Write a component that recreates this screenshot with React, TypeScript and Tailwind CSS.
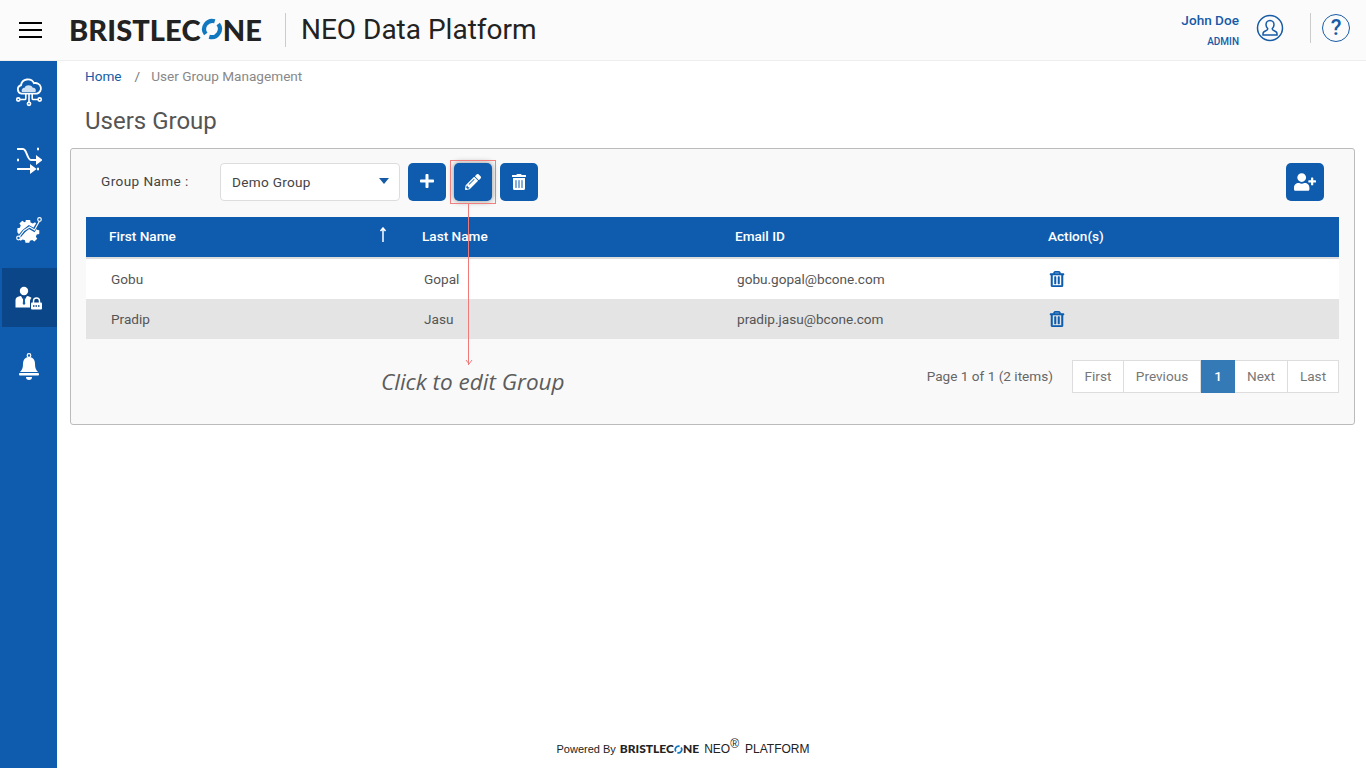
import React from "react";
import { FaPlus, FaPencilAlt, FaTrashAlt, FaUserPlus, FaRegTrashAlt } from "react-icons/fa";

function LogoO({ size }: { size: number }) {
  return (
    <svg width={size} height={size} viewBox="0 0 24 24" className="inline-block shrink-0">
      <path d="M5.2 17.5A9 9 0 0 1 15 3.5" fill="none" stroke="#1178c0" strokeWidth="4.6" />
      <path d="M18.8 6.5A9 9 0 0 1 9 20.5" fill="none" stroke="#1178c0" strokeWidth="4.6" />
    </svg>
  );
}

function Logo({ small }: { small?: boolean }) {
  if (small) {
    return (
      <span className="flex items-center font-['Lato',sans-serif] font-black text-[12px] leading-none text-[#222]">
        BRISTLEC<LogoO size={9} />NE
      </span>
    );
  }
  return (
    <span className="flex items-center font-['Lato',sans-serif] font-black text-[29px] leading-none text-[#222] tracking-[0.1px]">
      BRISTLEC<LogoO size={22} />NE
    </span>
  );
}

const CloudIcon = () => (
  <svg width="30" height="30" viewBox="0 0 28 28" fill="none" stroke="#fff" strokeWidth="1.5">
    <path d="M7 15.5a4 4 0 0 1-.5-7.8A6.5 6.5 0 0 1 18.7 5.8 4.9 4.9 0 0 1 21.5 15.5Z" fill="#0f5cae" strokeWidth="1.7" />
    <path d="M7.5 14c-1-2 .5-4 2.5-4 1-3 6-3 7.5 0 2.5 0 3.5 2 2.5 4Z" fill="#cfe0f2" stroke="none" />
    <path d="M14 15.5V24M11 15.5v4.500q0 1-1 1H5.500M17 15.5v4.500q0 1 1 1h4.500" />
    <circle cx="4" cy="21" r="1.500" /><circle cx="24" cy="21" r="1.500" /><circle cx="14" cy="25" r="1.500" />
  </svg>
);
const ShuffleIcon = () => (
  <svg width="26" height="28" viewBox="0 0 26 28" fill="none" stroke="#fff" strokeWidth="2">
    <path d="M1 3h6c4 0 4 11 8 11h7" />
    <path d="M21 11l4 3-4 3Z" fill="#fff" />
    <path d="M1 23h15" />
    <path d="M15 20l4 3-4 3Z" fill="#fff" />
    <path d="M1 14h2M21 3h2M21 23h2" strokeWidth="2.4" />
  </svg>
);
const GearIcon = () => (
  <svg width="28" height="28" viewBox="0 0 28 28" fill="none">
    <path d="M11 4h5l.6 3 2.600 1.200 2.600-1.500 3 3.500-1.800 2.500.8 2.800 3 .8v4.200l-3 .7-1 2.600 1.600 2.500-3.400 3-2.500-1.700-2.700 1-.8 2.400h-4.400l-.7-3-2.600-1-2.500 1.600-3-3.200 1.600-2.600-1-2.600L1 18.500v-4.600l3-.7 1-2.600-1.600-2.500 3.400-3 2.500 1.700 1.300-.6Z" fill="#fff" transform="translate(1.500 1.500) scale(0.85)" />
    <path d="M3 23l6-7 5-4 5 3 6-10" stroke="#0f5cae" strokeWidth="3.400" />
    <path d="M4 22l5-6.500 5.500-3.500 5 3 5-9" stroke="#fff" strokeWidth="1.200" />
    <circle cx="24.500" cy="4.500" r="1.800" stroke="#fff" strokeWidth="1.200" fill="#0f5cae" />
    <circle cx="3.500" cy="23" r="1.800" stroke="#fff" strokeWidth="1.200" fill="#0f5cae" />
  </svg>
);
const UserLockIcon = () => (
  <svg width="28" height="28" viewBox="0 0 28 28">
    <circle cx="9" cy="7" r="4.2" fill="#fff" />
    <path d="M0.500 23.500V16c0-2.500 2-3.500 5.500-4l3 5 3-5c2 .3 3.500 .8 4.500 2-1 .8-1.500 2-1.500 3.500V23.500Z" fill="#fff" />
    <path d="M8.300 13.500h1.400l.5 6-1.200 1.800L7.800 19.500Z" fill="#0f5cae" />
    <path d="M18.500 19v-2a3 3 0 0 1 6 0v2" fill="none" stroke="#fff" strokeWidth="1.400" />
    <rect x="16" y="18.500" width="11" height="7" rx="1" fill="#fff" />
    <path d="M18 22h7" stroke="#0a4688" strokeWidth="1.600" strokeDasharray="1.500 1" />
  </svg>
);
const BellIcon = () => (
  <svg width="26" height="30" viewBox="0 0 26 30">
    <circle cx="13" cy="3.500" r="1.800" fill="none" stroke="#fff" strokeWidth="1.200" />
    <path d="M13 5c4 0 6 3 6 7 0 4 1 6 3 8H4c2-2 3-4 3-8 0-4 2-7 6-7Z" fill="#fff" />
    <rect x="3" y="21" width="20" height="2.500" rx="1" fill="#fff" />
    <path d="M10 25h6a3 3 0 0 1-6 0Z" fill="#fff" />
  </svg>
);

function SideItem({ active, children }: { active?: boolean; children: React.ReactNode }) {
  return (
    <div className={`h-[59px] ml-[2px] pr-[2px] flex items-center justify-center ${active ? "bg-[#0a4688]" : ""}`}>
      {children}
    </div>
  );
}

function IconBtn({ children, shadow }: { children: React.ReactNode; shadow?: boolean }) {
  return (
    <button className={`w-[38px] h-[38px] rounded-[5px] bg-[#0f5cae] text-white flex items-center justify-center ${shadow ? "shadow-[0_0_6px_rgba(0,0,0,0.45)]" : ""}`}>
      {children}
    </button>
  );
}

function PageBtn({ label, active, className }: { label: string; active?: boolean; className: string }) {
  return (
    <div className={`h-[33px] flex items-center justify-center text-[13.6px] ${active ? "bg-[#337ab7] text-white font-medium" : "bg-white text-[#777] border-y border-r border-[#ddd]"} ${className}`}>
      {label}
    </div>
  );
}

const rows = [
  { first: "Gobu", last: "Gopal", email: "gobu.gopal@bcone.com", bg: "bg-white" },
  { first: "Pradip", last: "Jasu", email: "pradip.jasu@bcone.com", bg: "bg-[#e4e4e4]" },
];

export default function App() {
  return (
    <div className="w-[1366px] h-[768px] overflow-hidden bg-white font-['Roboto',sans-serif] flex flex-col">
      <header className="h-[61px] shrink-0 bg-[#fbfbfb] border-b border-[#eee] flex items-center">
        <div className="ml-[19px] w-[23px] flex flex-col gap-[5px]">
          <span className="h-[2px] bg-black block" />
          <span className="h-[2px] bg-black block" />
          <span className="h-[2px] bg-black block" />
        </div>
        <div className="ml-[27px] mb-[2px]"><Logo /></div>
        <div className="ml-[23px] w-px h-[34px] bg-[#ccc]" />
        <div className="ml-[15px] text-[28px] leading-none text-[#222]">NEO Data Platform</div>
        <div className="ml-auto flex items-center">
          <div className="flex flex-col items-end text-[#175ba6]">
            <span className="text-[13.6px] leading-[16px] font-medium mt-[-1px]">John Doe</span>
            <span className="text-[10px] leading-[12px] font-medium mt-[8px]">ADMIN</span>
          </div>
          <svg width="28" height="28" viewBox="0 0 28 28" fill="none" stroke="#175ba6" strokeWidth="1.500" className="ml-[17px] mb-[4px]">
            <circle cx="14" cy="14" r="12.500" />
            <path d="M14 6.500c-2.500 0-4 2-4 4.200 0 1.800.8 3 1.800 4 0 1-.5 1.500-2 2-1.500.5-2.800 1.300-2.800 2.800V21h14v-1.500c0-1.500-1.300-2.300-2.800-2.800-1.500-.5-2-1-2-2 1-1 1.800-2.200 1.800-4 0-2.200-1.500-4.200-4-4.200Z" />
          </svg>
          <div className="ml-[26px] w-px h-[30px] bg-[#ccc] mb-[4px]" />
          <div className="ml-[11px] mr-[16px] mb-[4px] w-[28px] h-[28px] rounded-full border-[1.5px] border-[#175ba6] text-[#175ba6] flex items-center justify-center text-[22px] font-medium leading-none">?</div>
        </div>
      </header>

      <div className="flex flex-1 min-h-0">
        <aside className="w-[57px] shrink-0 bg-[#0f5cae] flex flex-col pt-[1px]">
          <SideItem><CloudIcon /></SideItem>
          <div className="h-[9px]" />
          <SideItem><ShuffleIcon /></SideItem>
          <div className="h-[10px]" />
          <SideItem><GearIcon /></SideItem>
          <div className="h-[10px]" />
          <SideItem active><UserLockIcon /></SideItem>
          <div className="h-[10px]" />
          <SideItem><BellIcon /></SideItem>
        </aside>

        <main className="flex-1 min-w-0 flex flex-col pl-[13px] pr-[11px]">
          <div className="pl-[15px] pt-[7px] h-[32px] text-[13.6px] leading-[16px] flex">
            <span className="text-[#175ba6]">Home</span>
            <span className="text-[#777] ml-[13px]">/</span>
            <span className="text-[#888] ml-[11px]">User Group Management</span>
          </div>
          <h1 className="pl-[15px] pt-[14px] text-[24px] leading-[28px] text-[#555] font-normal">Users Group</h1>

          <section className="relative mt-[13px] h-[277px] bg-[#f9f9f9] border border-[#bbb] rounded-[3px] px-[15px]">
            <div className="h-[68px] flex items-start pt-[14px]">
              <span className="ml-[15px] w-[119px] text-[13.6px] leading-[36px] text-[#444] tracking-[0.4px]">Group Name :</span>
              <div className="w-[180px] h-[38px] bg-white border border-[#ddd] rounded-[4px] flex items-center pl-[11px] pr-[10px] text-[13.6px] text-[#444] tracking-[0.3px]">
                <span>Demo Group</span>
                <span className="ml-auto w-0 h-0 border-x-[5px] border-x-transparent border-t-[6px] border-t-[#175ba6] mb-[3px]" />
              </div>
              <div className="ml-[8px] flex gap-[8px]">
                <IconBtn><span className="mb-[3px]"><FaPlus size={16} /></span></IconBtn>
                <IconBtn shadow><FaPencilAlt size={16} /></IconBtn>
                <IconBtn><FaTrashAlt size={16} /></IconBtn>
              </div>
              <div className="ml-auto mr-[15px]">
                <IconBtn><FaUserPlus size={22} /></IconBtn>
              </div>
            </div>

            <div className="h-[38px] pb-[2px] bg-[#0f5cae] box-content border-b-2 border-[#ddd] grid grid-cols-[313px_313px_313px_1fr] items-center text-white text-[13.6px] font-medium">
              <div className="pl-[23px] relative h-full flex items-center">
                First Name
                <svg width="8" height="16" viewBox="0 0 8 16" className="absolute left-[293px] top-[10px]" fill="none" stroke="#fff" strokeWidth="1.500">
                  <path d="M4 15V1M1.500 4L4 1l2.500 3" />
                </svg>
              </div>
              <div className="pl-[23px]">Last Name</div>
              <div className="pl-[23px]">Email ID</div>
              <div className="pl-[23px]">Action(s)</div>
            </div>
            {rows.map((r) => (
              <div key={r.first} className={`h-[40px] ${r.bg} grid grid-cols-[313px_313px_313px_1fr] items-center text-[13.6px] text-[#555]`}>
                <div className="pl-[25px]">{r.first}</div>
                <div className="pl-[25px]">{r.last}</div>
                <div className="pl-[25px]">{r.email}</div>
                <div className="pl-[24px] text-[#0f5cae]"><FaRegTrashAlt size={16} stroke="currentColor" strokeWidth={18} /></div>
              </div>
            ))}

            <div className="flex items-center mt-[21px]">
              <span className="ml-auto mr-[19px] text-[13.6px] text-[#666]">Page 1 of 1 (2 items)</span>
              <div className="flex">
                <PageBtn label="First" className="w-[52px] border-l" />
                <PageBtn label="Previous" className="w-[77px]" />
                <PageBtn label="1" active className="w-[34px]" />
                <PageBtn label="Next" className="w-[53px]" />
                <PageBtn label="Last" className="w-[51px]" />
              </div>
            </div>

            {/* annotation overlay */}
            <div className="absolute left-[379px] top-[11px] w-[46px] h-[44px] border border-[#f08080]" />
            <div className="absolute left-[397px] top-[55px] w-px h-[161px] bg-[#f07a7a]" />
            <svg width="8" height="6" viewBox="0 0 8 6" className="absolute left-[394px] top-[210px]" fill="none" stroke="#f07a7a">
              <path d="M1 1l3 4 3-4" />
            </svg>
            <div className="absolute left-[310px] top-[218px] font-['Open_Sans',sans-serif] italic text-[22.5px] leading-[30px] text-[#5c5c5c] whitespace-nowrap">Click to edit Group</div>
          </section>

          <footer className="mt-auto h-[27px] flex items-start justify-center text-[#222]">
            <div className="flex items-center mr-[59px] font-['Liberation_Sans',sans-serif]">
              <span className="text-[11px] leading-[16px]">Powered By</span>
              <span className="ml-[4px]"><Logo small /></span>
              <span className="ml-[5px] text-[12px] leading-[16px]">NEO<sup className="text-[12px] top-[-5px] relative align-baseline">®</sup></span>
              <span className="ml-[6px] text-[12px] leading-[16px]">PLATFORM</span>
            </div>
          </footer>
        </main>
      </div>
    </div>
  );
}
